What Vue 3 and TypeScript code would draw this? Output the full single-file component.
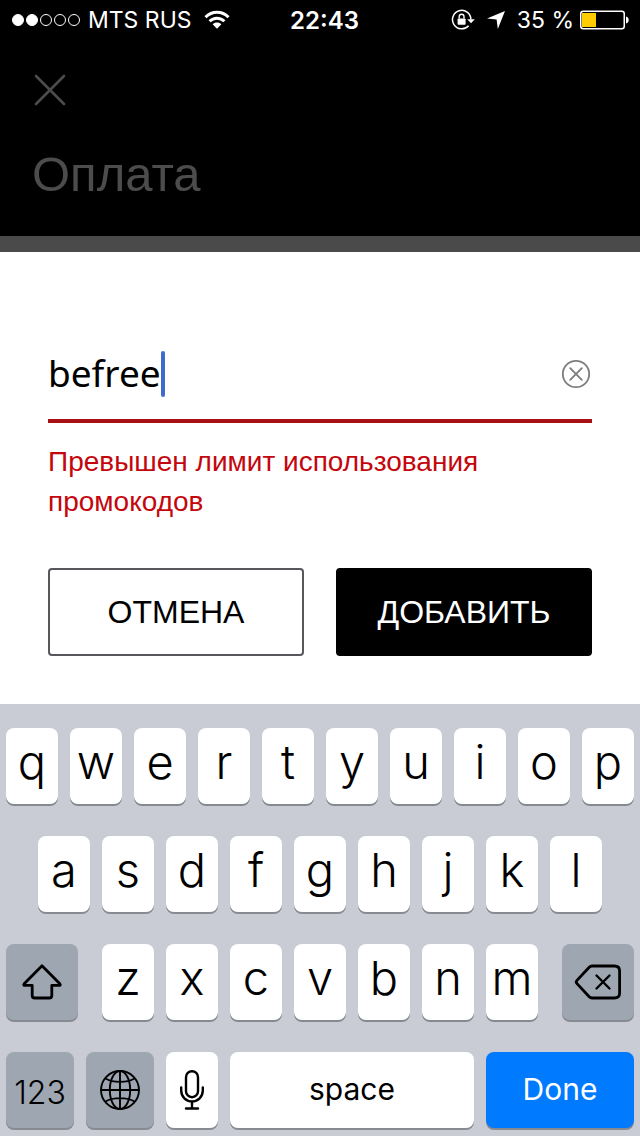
<script setup lang="ts">
import { ref } from 'vue'

const promo = ref<string>('befree')
const signal: boolean[] = [true, true, false, false, false]
const topRow: string[] = [...'qwertyuiop']
const homeRow: string[] = [...'asdfghjkl']
const bottomRow: string[] = [...'zxcvbnm']

function type(letter: string): void {
  promo.value += letter
}

function erase(): void {
  promo.value = promo.value.slice(0, -1)
}

function clear(): void {
  promo.value = ''
}
</script>

<template>
  <div class="screen">
    <header class="top">
      <div class="status">
        <div class="status-left">
          <span class="signal">
            <span v-for="(on, i) in signal" :key="i" class="dot" :class="{ on }"></span>
          </span>
          <span>MTS RUS</span>
          <svg class="wifi" width="26" height="20" viewBox="0 0 26 20" aria-hidden="true">
            <g fill="none" stroke="#fff" stroke-width="3">
              <path d="M1.5 7.2C8 0.6 18 0.6 24.500 7.200" />
              <path d="M5.600 11.300C9.800 7.200 16.200 7.200 20.400 11.300" />
            </g>
            <path d="M8.600 14.300C11 12 15 12 17.400 14.300L13 18.800Z" fill="#fff" />
          </svg>
        </div>
        <time class="time">22:43</time>
        <div class="status-right">
          <svg width="24" height="22" viewBox="0 0 24 22" aria-hidden="true">
            <path d="M17.600 16.700A9.200 9.200 0 1 1 19.900 10.500" fill="none" stroke="#fff" stroke-width="1.500" />
            <path d="M16.200 10.200H23.800L20 14.200Z" fill="#fff" />
            <rect x="6.600" y="9.400" width="8" height="6.400" rx="0.800" fill="#fff" />
            <path d="M8.200 9.600V7.600a2.400 2.400 0 0 1 4.800 0V9.600" fill="none" stroke="#fff" stroke-width="1.400" />
          </svg>
          <svg class="arrow" width="18" height="18" viewBox="0 0 18 18" aria-hidden="true">
            <path d="M18 0L10.800 18L9.600 8.600L0 7.400Z" fill="#fff" />
          </svg>
          <span>35 %</span>
          <svg class="battery" width="49" height="20" viewBox="0 0 49 20" aria-hidden="true">
            <rect x="0.750" y="1.250" width="43.500" height="17.500" rx="2.500" fill="none" stroke="#fff" stroke-width="1.500" />
            <rect x="2" y="3" width="14" height="14" fill="#fc0" />
            <path d="M46 6.500C49.600 7 49.600 13 46 13.500Z" fill="#fff" />
          </svg>
        </div>
      </div>
      <button class="close" type="button" aria-label="Закрыть">
        <svg width="32" height="32" viewBox="0 0 32 32">
          <path d="M2 2L30 30M30 2L2 30" stroke="#4c4c4c" stroke-width="2.600" stroke-linecap="round" />
        </svg>
      </button>
      <h1 class="title">Оплата</h1>
    </header>

    <main class="dialog">
      <div class="field">
        <label class="entry">
          <input v-model="promo" class="code" type="text" size="1" aria-label="Промокод" aria-describedby="promo-error" />
          <span class="caret"></span>
        </label>
        <button class="clear" type="button" aria-label="Очистить" @click="clear">
          <svg width="30" height="30" viewBox="0 0 30 30">
            <g fill="none" stroke="#7d7d7d" stroke-width="1.800">
              <circle cx="15" cy="15" r="13.200" />
              <path d="M9.200 9.200L20.800 20.800M20.800 9.200L9.200 20.800" stroke-linecap="round" />
            </g>
          </svg>
        </button>
      </div>
      <p id="promo-error" class="error">Превышен лимит использования промокодов</p>
      <div class="actions">
        <button class="action" type="button">ОТМЕНА</button>
        <button class="action primary" type="button">ДОБАВИТЬ</button>
      </div>
    </main>

    <section class="keyboard" aria-label="Клавиатура">
      <div class="row">
        <button v-for="k in topRow" :key="k" class="key" type="button" @click="type(k)">{{ k }}</button>
      </div>
      <div class="row home">
        <button v-for="k in homeRow" :key="k" class="key" type="button" @click="type(k)">{{ k }}</button>
      </div>
      <div class="row">
        <button class="key dark shift" type="button" aria-label="Shift">
          <svg width="40" height="36" viewBox="0 0 40 36">
            <path d="M20 1.800L37.800 19.800Q39 21.400 37 21.400H29.800V31.500Q29.800 34 27.300 34H12.700Q10.200 34 10.200 31.500V21.400H3Q1 21.400 2.200 19.800Z" fill="none" stroke="#000" stroke-width="2.800" stroke-linejoin="round" />
          </svg>
        </button>
        <button v-for="k in bottomRow" :key="k" class="key" type="button" @click="type(k)">{{ k }}</button>
        <button class="key dark delete" type="button" aria-label="Delete" @click="erase">
          <svg width="48" height="36" viewBox="0 0 48 36">
            <g fill="none" stroke="#000" stroke-width="2.800" stroke-linejoin="round" stroke-linecap="round">
              <path d="M18 2H40.500Q45.600 2 45.600 7V29Q45.600 34 40.500 34H18Q16.400 34 15.200 32.800L3 19.600Q1.400 18 3 16.400L15.200 3.200Q16.400 2 18 2Z" />
              <path d="M22.500 11.500L35.500 24.500M35.500 11.500L22.500 24.500" stroke-width="2.400" />
            </g>
          </svg>
        </button>
      </div>
      <div class="row">
        <button class="key dark numbers" type="button">123</button>
        <button class="key dark globe" type="button" aria-label="Язык">
          <svg width="42" height="42" viewBox="0 0 42 42">
            <g fill="none" stroke="#000" stroke-width="1.900">
              <circle cx="21" cy="21" r="19" />
              <ellipse cx="21" cy="21" rx="10.200" ry="19" />
              <path d="M21 2V40M2 21H40M6.500 9.500C14 14 28 14 35.500 9.500M6.500 32.500C14 28 28 28 35.500 32.500" />
            </g>
          </svg>
        </button>
        <button class="key mic" type="button" aria-label="Диктовка">
          <svg width="26" height="42" viewBox="0 0 26 42">
            <g fill="none" stroke="#000" stroke-width="2.400" stroke-linecap="round">
              <rect x="7" y="2.200" width="12" height="26" rx="6" />
              <path d="M2.200 18.500V21.500C2.200 28 7 32.400 13 32.400S23.800 28 23.800 21.500V18.500M13 32.400V39.500M7 39.500H19" />
            </g>
          </svg>
        </button>
        <button class="key space" type="button" @click="type(' ')">space</button>
        <button class="key done" type="button">Done</button>
      </div>
    </section>
  </div>
</template>

<style>
body {
  margin: 0;
  background: #000;
}
</style>

<style scoped>
.screen {
  display: flex;
  flex-direction: column;
  min-height: 100vh;
  background: #fff;
  font-family: "Liberation Sans", Arial, sans-serif;
}

button {
  margin: 0;
  padding: 0;
  border: 0;
  font: inherit;
  color: inherit;
  background: none;
}

svg {
  display: block;
  flex: none;
}

.top {
  padding-bottom: 32px;
  border-bottom: 16px solid #4a4a4a;
  background: #000;
}

.status {
  display: grid;
  grid-template-columns: 1fr auto 1fr;
  align-items: center;
  height: 40px;
  padding: 0 11px 0 12px;
  color: #fff;
  font-family: Inter, sans-serif;
  font-size: 23px;
  white-space: pre;
}

.status-left,
.status-right {
  display: flex;
  align-items: center;
}

.status-right {
  justify-content: flex-end;
}

.signal {
  display: flex;
  gap: 2px;
  margin-right: 8px;
}

.dot {
  box-sizing: border-box;
  width: 12px;
  height: 12px;
  border: 1px solid #fff;
  border-radius: 50%;
}

.dot.on {
  background: #fff;
}

.wifi {
  margin-left: 12px;
}

.time {
  padding-left: 8px;
  font-size: 24px;
  font-weight: 600;
}

.arrow {
  margin: 0 12px;
}

.battery {
  margin-left: 6px;
}

.close {
  display: block;
  margin: 34px 0 0 34px;
}

.title {
  margin: 38px 32px 0;
  color: #4c4c4c;
  font-size: 49px;
  font-weight: 400;
  line-height: 60px;
}

.dialog {
  flex: 1;
  padding: 80px 48px 48px;
}

.field {
  display: flex;
  align-items: center;
  box-sizing: border-box;
  height: 91px;
  padding: 0 1px 3px 0;
  border-bottom: 4px solid #a81016;
}

.entry {
  display: flex;
  flex: 1;
  align-items: center;
}

.code {
  field-sizing: content;
  padding: 0 0 2px;
  border: 0;
  outline: 0;
  color: #000;
  background: none;
  font-family: "Noto Sans", sans-serif;
  font-size: 37px;
  line-height: 48px;
}

.caret {
  width: 4px;
  height: 46px;
  border-radius: 2px;
  background: #4169d0;
}

.error {
  margin: 19px 0 0;
  color: #c4060d;
  font-size: 28px;
  line-height: 40px;
}

.actions {
  display: flex;
  gap: 32px;
  margin-top: 46px;
}

.action {
  box-sizing: border-box;
  flex: 1;
  height: 88px;
  border: 2px solid #57575c;
  border-radius: 4px;
  color: #000;
  font-size: 32px;
}

.action.primary {
  border-color: #000;
  color: #fff;
  background: #000;
}

.keyboard {
  display: flex;
  flex-direction: column;
  gap: 32px;
  padding: 24px 6px 8px;
  background: #c9ccd5;
  font-family: Inter, sans-serif;
}

.row {
  display: flex;
  gap: 12px;
}

.row.home {
  padding: 0 32px;
}

.key {
  display: flex;
  flex: 52 1 0;
  align-items: center;
  justify-content: center;
  box-sizing: border-box;
  min-width: 0;
  height: 76px;
  padding-bottom: 10px;
  border-radius: 8px;
  color: #000;
  background: #fff;
  box-shadow: 0 2px 0 #878a90;
  font-size: 47px;
  font-weight: 350;
}

.key.dark {
  background: #9ea6b2;
}

.key.shift,
.key.delete {
  flex-grow: 72;
  padding: 0;
}

.key.shift {
  margin-right: 12px;
}

.key.delete {
  margin-left: 12px;
}

.key.numbers,
.key.globe {
  flex-grow: 68;
  padding: 0;
  font-size: 32px;
}

.key.numbers {
  padding-top: 4px;
}

.key.mic {
  padding: 0;
}

.key.space,
.key.done {
  padding-bottom: 2px;
  font-size: 30px;
  font-weight: 400;
}

.key.space {
  flex-grow: 244;
}

.key.done {
  flex-grow: 148;
  color: #fff;
  background: #007aff;
}
</style>
